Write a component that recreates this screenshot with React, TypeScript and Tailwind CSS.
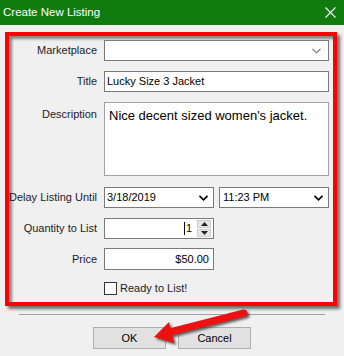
import React from "react";

const font = { fontFamily: '"Liberation Sans", Arial, sans-serif' };

function Chevron({ dark }: { dark?: boolean }) {
  return (
    <svg width="9" height="6" viewBox="0 0 9 6" className="shrink-0">
      <path
        d="M0.5 0.8 L4.5 4.8 L8.5 0.8"
        fill="none"
        stroke={dark ? "#000" : "#6d6d6d"}
        strokeWidth={dark ? 1.6 : 1.1}
      />
    </svg>
  );
}

function Row({ label, children, top, className = "" }: { label: string; children: React.ReactNode; top?: boolean; className?: string }) {
  return (
    <div className={`flex ${top ? "items-start" : "items-center"} ${className}`}>
      <div className={`w-[88px] shrink-0 whitespace-nowrap text-right text-[11px] text-[#1b1b2a] ${top ? "pt-[4px]" : ""}`}>{label}</div>
      <div className="ml-[7px]">{children}</div>
    </div>
  );
}

export default function App() {
  return (
    <div className="relative w-[344px] h-[356px] bg-[#f0f0f0] overflow-hidden" style={font}>
      <div className="h-[25px] bg-[#107c10] flex items-center justify-between pl-[3px] pr-[8px]">
        <span className="text-white text-[11.5px]">Create New Listing</span>
        <svg width="11" height="11" viewBox="0 0 11 11">
          <path d="M0.5 0.5 L10.5 10.5 M10.5 0.5 L0.5 10.5" stroke="#fff" strokeWidth="1.1" />
        </svg>
      </div>

      <div className="ml-[5px] mt-[7px] w-[332px] h-[274px] border-4 border-[#ff0000] shadow-[3px_3px_3px_rgba(0,0,0,0.55),inset_3px_3px_3px_rgba(0,0,0,0.45)] pt-[4px]">
        <Row label="Marketplace">
          <div className="w-[225px] h-[21px] bg-white border border-[#7a7a7a] flex items-center justify-end pr-[7px]">
            <Chevron />
          </div>
        </Row>
        <Row label="Title" className="mt-[10px]">
          <div className="w-[225px] h-[21px] bg-white border border-[#7a7a7a] flex items-center pl-[2px] text-[11px] text-black">
            Lucky Size 3 Jacket
          </div>
        </Row>
        <Row label="Description" top className="mt-[10px]">
          <div className="w-[225px] h-[74px] bg-white border border-[#a0a0a0] pl-[4px] pt-[3px] text-[13px] text-black">
            Nice decent sized women's jacket.
          </div>
        </Row>
        <Row label="Delay Listing Until" className="mt-[11px]">
          <div className="flex gap-[5px]">
            <div className="w-[110px] h-[21px] bg-white border border-[#7a7a7a] flex items-center justify-between pl-[2px] pr-[5px] text-[11px] text-black">
              <span>3/18/2019</span>
              <Chevron dark />
            </div>
            <div className="w-[110px] h-[21px] bg-white border border-[#7a7a7a] flex items-center justify-between pl-[3px] pr-[5px] text-[11px] text-black">
              <span>11:23 PM</span>
              <Chevron dark />
            </div>
          </div>
        </Row>
        <Row label="Quantity to List" className="mt-[10px]">
          <div className="w-[110px] h-[21px] bg-white border border-[#7a7a7a] flex items-center justify-end text-[11px] text-black">
            <span className="w-px h-[13px] bg-black mr-px" />
            <span>1</span>
            <div className="ml-[5px] mr-[2px] w-[14px] h-[17px] flex flex-col gap-px">
              <div className="flex-1 bg-[#e6e6e6] border border-[#cfcfcf] flex items-center justify-center">
                <svg width="7" height="4" viewBox="0 0 7 4"><path d="M0 4 L3.5 0 L7 4 Z" fill="#222" /></svg>
              </div>
              <div className="flex-1 bg-[#e6e6e6] border border-[#cfcfcf] flex items-center justify-center">
                <svg width="7" height="4" viewBox="0 0 7 4"><path d="M0 0 L3.5 4 L7 0 Z" fill="#222" /></svg>
              </div>
            </div>
          </div>
        </Row>
        <Row label="Price" className="mt-[9px]">
          <div className="w-[110px] h-[22px] bg-white border border-[#7a7a7a] flex items-center justify-end pr-[4px] text-[11px] text-black">
            $50.00
          </div>
        </Row>
        <div className="mt-[10px] ml-[95px] flex items-center gap-[3px]">
          <div className="w-[13px] h-[13px] bg-white border border-[#333]" />
          <span className="text-[11px] text-[#1b1b2a]">Ready to List!</span>
        </div>
      </div>

      <div className="mt-[8px] ml-[19px] w-[306px] h-px bg-[#a0a0a0]" />

      <div className="mt-[12px] ml-[93px] flex gap-[12px]">
        <div className="w-[73px] h-[22px] bg-[#e1e1e1] border border-[#adadad] flex items-center justify-center text-[11px] text-black">OK</div>
        <div className="w-[73px] h-[22px] bg-[#e1e1e1] border border-[#adadad] flex items-center justify-center text-[11px] text-black">Cancel</div>
      </div>

      <svg className="absolute inset-0 pointer-events-none" width="344" height="356" viewBox="0 0 344 356">
        <defs>
          <filter id="sh" x="-20%" y="-20%" width="140%" height="140%">
            <feGaussianBlur stdDeviation="1.2" />
          </filter>
        </defs>
        <g transform="translate(2 2)" filter="url(#sh)" opacity="0.75">
          <line x1="166" y1="333" x2="244" y2="313" stroke="#333" strokeWidth="7" strokeLinecap="round" />
          <polygon points="154,337 169,322 174,343" fill="#333" />
        </g>
        <line x1="166" y1="333" x2="244" y2="313" stroke="#ee1111" strokeWidth="7" strokeLinecap="round" />
        <polygon points="154,337 169,322 174,343" fill="#ee1111" />
      </svg>
    </div>
  );
}
